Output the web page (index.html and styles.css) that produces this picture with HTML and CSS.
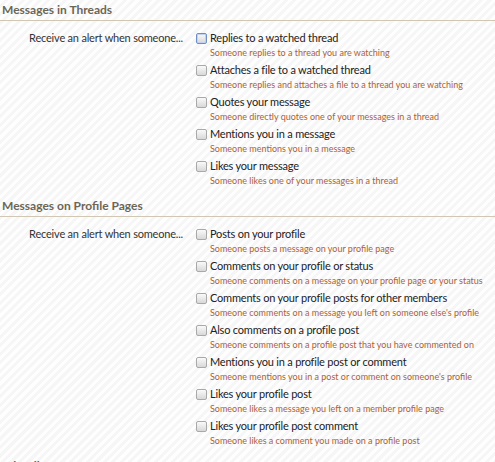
FILE: index.html
```html
<!DOCTYPE html>
<html lang="en">
  <head>
    <meta charset="UTF-8" />
    <title>Alert Preferences</title>
    <link rel="stylesheet" href="styles.css">
  </head>
  <body>
    <h3 class="section-heading">Messages in Threads</h3>
    <dl class="ctrl-unit">
      <dt>Receive an alert when someone...</dt>
      <dd>
        <ul class="check-list">
          <li>
            <span class="check focus"></span>
            <span class="title">Replies to a watched thread</span>
            <span class="hint">Someone replies to a thread you are watching</span>
          </li>
          <li>
            <span class="check"></span>
            <span class="title">Attaches a file to a watched thread</span>
            <span class="hint">Someone replies and attaches a file to a thread you are watching</span>
          </li>
          <li>
            <span class="check"></span>
            <span class="title">Quotes your message</span>
            <span class="hint">Someone directly quotes one of your messages in a thread</span>
          </li>
          <li>
            <span class="check"></span>
            <span class="title">Mentions you in a message</span>
            <span class="hint">Someone mentions you in a message</span>
          </li>
          <li>
            <span class="check"></span>
            <span class="title">Likes your message</span>
            <span class="hint">Someone likes one of your messages in a thread</span>
          </li>
        </ul>
      </dd>
    </dl>

    <h3 class="section-heading">Messages on Profile Pages</h3>
    <dl class="ctrl-unit">
      <dt>Receive an alert when someone...</dt>
      <dd>
        <ul class="check-list">
          <li>
            <span class="check"></span>
            <span class="title">Posts on your profile</span>
            <span class="hint">Someone posts a message on your profile page</span>
          </li>
          <li>
            <span class="check"></span>
            <span class="title">Comments on your profile or status</span>
            <span class="hint">Someone comments on a message on your profile page or your status</span>
          </li>
          <li>
            <span class="check"></span>
            <span class="title">Comments on your profile posts for other members</span>
            <span class="hint">Someone comments on a message you left on someone else's profile</span>
          </li>
          <li>
            <span class="check"></span>
            <span class="title">Also comments on a profile post</span>
            <span class="hint">Someone comments on a profile post that you have commented on</span>
          </li>
          <li>
            <span class="check"></span>
            <span class="title">Mentions you in a profile post or comment</span>
            <span class="hint">Someone mentions you in a post or comment on someone's profile</span>
          </li>
          <li>
            <span class="check"></span>
            <span class="title">Likes your profile post</span>
            <span class="hint">Someone likes a message you left on a member profile page</span>
          </li>
          <li>
            <span class="check"></span>
            <span class="title">Likes your profile post comment</span>
            <span class="hint">Someone likes a comment you made on a profile post</span>
          </li>
        </ul>
      </dd>
    </dl>

    <h3 class="section-heading">Miscellaneous</h3>
  </body>
</html>
```

FILE: styles.css
```css
body {
  margin: 0;
  font-family: Lato, "Liberation Sans", sans-serif;
  font-size: 11px;
  letter-spacing: -0.2px;
  color: #222;
  background-color: #fdfdfd;
  background-image: repeating-linear-gradient(
    135deg,
    #fefefe 0px,
    #fefefe 3px,
    #f7f6f6 3px,
    #f7f6f6 6px
  );
  min-height: 462px;
  overflow: hidden;
}

.section-heading {
  margin: 0 0 9px;
  padding: 1px 2px 1px;
  font-size: 12px;
  line-height: 18px;
  font-weight: bold;
  letter-spacing: 0;
  color: #6b6657;
  border-bottom: 1px solid #d0c8b3;
}

.ctrl-unit {
  display: flex;
  margin: 0 0 6px;
}

.ctrl-unit dt {
  width: 183px;
  flex-shrink: 0;
  text-align: right;
  line-height: 16px;
  color: #333;
}

.ctrl-unit dd {
  margin: 0 0 0 13px;
}

.check-list {
  list-style: none;
  margin: 0;
  padding: 0;
}

.check-list li {
  display: grid;
  grid-template-columns: 11px 1fr;
  column-gap: 3px;
  margin-bottom: 2px;
}

.check {
  grid-row: 1;
  grid-column: 1;
  width: 9px;
  height: 9px;
  margin-top: 3px;
  border: 1px solid #a9a9a9;
  border-radius: 2px;
  background: linear-gradient(#fafafa, #d8d8d8);
}

.check.focus {
  border-color: #6f8fc4;
  box-shadow: 0 0 0 1px #c3d3ee inset;
}

.title {
  grid-row: 1;
  grid-column: 2;
  line-height: 16px;
  color: #222;
}

.hint {
  grid-row: 2;
  grid-column: 2;
  font-size: 9px;
  letter-spacing: 0;
  line-height: 14px;
  color: #ad6136;
  white-space: nowrap;
}
```
